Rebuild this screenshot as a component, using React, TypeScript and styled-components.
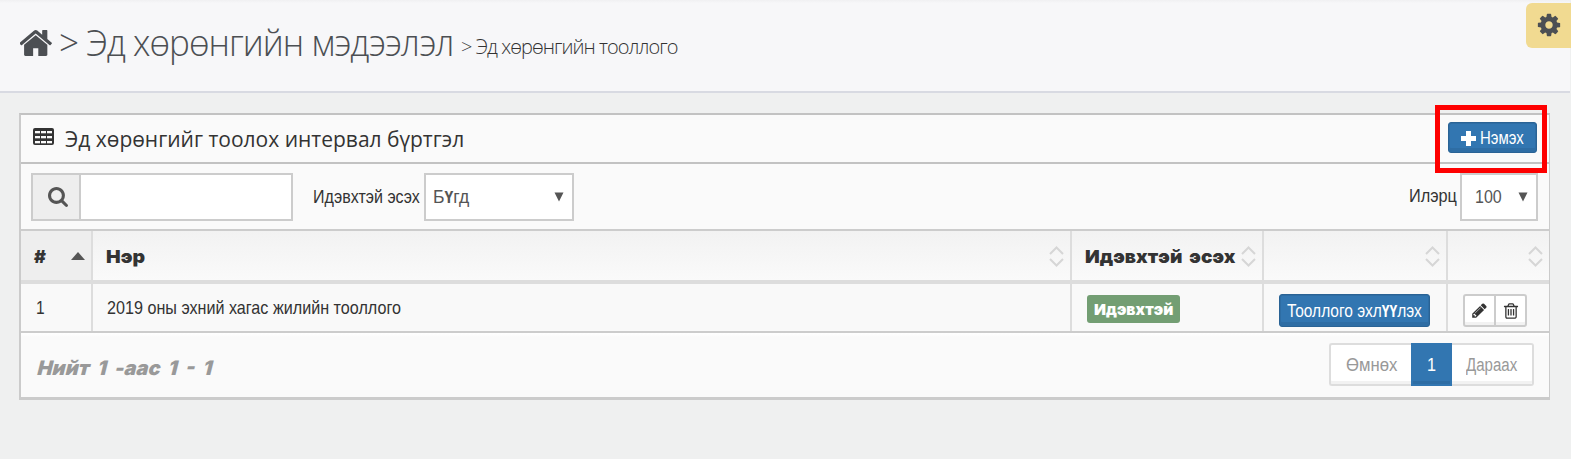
import React, { useLayoutEffect, useRef, useState } from 'react';
import styled, { createGlobalStyle, css } from 'styled-components';

const Global = createGlobalStyle`
  * { box-sizing: border-box; }
  html, body { margin: 0; padding: 0; }
  body {
    width: 1571px; height: 459px; overflow: hidden;
    background: #eff0f0;
    font-family: "Liberation Sans Narrow", "Liberation Sans", sans-serif;
    font-size: 19px; color: #333;
  }
`;

const FitBox = styled.span<{ $w: number }>`
  display: inline-block; flex: none;
  width: ${p => p.$w}px;
  white-space: nowrap;
`;
const FitInner = styled.span`
  display: inline-block; transform-origin: 0 50%; white-space: nowrap;
`;

/* Text condensed or widened to a given width */
function Fit({ w, children, className }: { w: number; children: React.ReactNode; className?: string }) {
  const ref = useRef<HTMLSpanElement>(null);
  const [scale, setScale] = useState(1);
  useLayoutEffect(() => {
    if (ref.current) setScale(w / ref.current.offsetWidth);
  }, [w]);
  return (
    <FitBox $w={w} className={className}>
      <FitInner ref={ref} style={{ transform: `scaleX(${scale})` }}>{children}</FitInner>
    </FitBox>
  );
}

const heavy = css`font-family: Inter, "Open Sans", sans-serif; font-weight: 900; word-spacing: 3px;`;

const Page = styled.div`width: 1571px; height: 459px; position: relative; overflow: hidden;`;

const Header = styled.header`
  width: 1570px; height: 93px; padding-left: 20px;
  display: flex; align-items: flex-start;
  background: linear-gradient(#f0f0f2, #f7f7f9 3px);
  border-bottom: 2px solid #d8dae2;
  font-family: "Open Sans", sans-serif; font-weight: 300;
  color: #4c4f53;
`;
const HomeSlot = styled.span`display: flex; margin-top: 30px; width: 39px; flex: none;`;
const Big = styled(Fit)`font-size: 36px; line-height: 50px; letter-spacing: -1px; margin: 18px 0 0 0;`;
const Crumb = styled(Fit)`font-size: 21px; line-height: 30px; letter-spacing: -1px; margin: 31px 0 0 8px; color: #333;`;

const GearTab = styled.div`
  position: absolute; right: 0; top: 3px; width: 45px; height: 45px;
  border-radius: 6px 0 0 6px; background: #f1da91; color: #4c4f53;
  display: flex; align-items: center; padding: 0 0 2px 10px;
`;

const Panel = styled.section`
  width: 1531px; margin: 20px 0 0 19px;
  border: 2px solid #cbcbcb; border-top-color: #c2c2c2; border-right-width: 1px; border-bottom-width: 3px;
  background: #fafafa;
`;
const TitleBar = styled.div`
  height: 49px; border-bottom: 2px solid #c2c2c2;
  display: flex; align-items: flex-start; padding: 0 12px;
`;
const TableSlot = styled.span`display: flex; margin-top: 13px; width: 32px; flex: none;`;
const Title = styled(Fit)`
  font-family: "Open Sans", sans-serif; font-size: 21px; line-height: 30px; margin-top: 9px;
`;
const Blue = styled.button<{ $w: number; $h: number }>`
  width: ${p => p.$w}px; height: ${p => p.$h}px; flex: none; padding: 0;
  display: flex; align-items: center; justify-content: center; gap: 4px;
  border: 1px solid #2a6395; border-radius: 3px;
  background: #3276b1; color: #fff; font: inherit; font-size: 18px;
  box-shadow: inset 1px 0 0 #2e6da4, inset -1px 0 0 #2e6da4, inset 0 1px 0 #2e6da4, inset 0 -4px 0 #2e6da4;
`;
const AddButton = styled(Blue)`margin: 7px 0 0 auto; padding-top: 1px; padding-right: 1px;`;

const Toolbar = styled.div`
  height: 67px; padding: 9px 11px 0 10px; border-bottom: 2px solid #ccc;
  display: flex; align-items: flex-start;
`;
const SearchBox = styled.div`
  width: 262px; height: 48px; display: flex; border: 2px solid #ccc; background: #fff;
`;
const Addon = styled.span`
  width: 48px; border-right: 2px solid #ccc; background: #eee; color: #555;
  display: flex; align-items: center; padding-left: 15px; padding-bottom: 1px;
`;
const Label = styled(Fit)`line-height: 22px; margin: 13px 0 0 20px;`;
const RightLabel = styled(Fit)`line-height: 22px; margin: 12px 3px 0 auto;`;
const Select = styled.div<{ $w: number; $pad: number; $ml?: number }>`
  width: ${p => p.$w}px; height: 48px; margin-left: ${p => p.$ml || 0}px;
  border: 2px solid #ccc; background: #fff; color: #555;
  display: flex; align-items: center; justify-content: space-between;
  padding: 0 8px 0 ${p => p.$pad}px;
`;

const cols = '72px 979px 192px 184px 101px';
const HeadRow = styled.div`
  display: grid; grid-template-columns: ${cols}; height: 53px; border-bottom: 4px solid #ddd;
`;
const Th = styled.div<{ $sorted?: boolean }>`
  display: flex; align-items: center; justify-content: space-between;
  padding: 1px 6px 0 13px; border-right: 2px solid #ddd;
  background: ${p => (p.$sorted ? '#eee' : 'linear-gradient(#f2f2f2, #fafafa)')};
  font-size: 18px; ${heavy}
  &:last-child { border-right: 0; }
`;
const Row = styled.div`
  display: grid; grid-template-columns: ${cols}; height: 49px;
  background: #f9f9f9; border-bottom: 2px solid #ccc;
`;
const Td = styled.div<{ $l: number }>`
  display: flex; align-items: flex-start; padding-left: ${p => p.$l}px; border-right: 2px solid #ddd;
  &:last-child { border-right: 0; }
`;
const CellText = styled(Fit)`line-height: 22px; margin-top: 13px;`;
const Badge = styled.span`
  width: 93px; height: 28px; margin-top: 11px; border-radius: 3px; background: #739e73; color: #fff;
  display: flex; align-items: center; justify-content: center;
  font-size: 15px; ${heavy}
`;
const StartButton = styled(Blue)`margin-top: 10px; padding-top: 1px;`;
const IconGroup = styled.div`
  display: flex; width: 64px; height: 33px; margin-top: 10px;
  border: 2px solid #ccc; border-radius: 3px; background: #fff; box-shadow: inset 0 -3px 0 #f2f2f2;
`;
const IconButton = styled.span`
  flex: 1; display: flex; align-items: center; justify-content: center;
  & + & { border-left: 2px solid #ccc; }
`;

const Footer = styled.div`
  height: 64px; display: flex; align-items: flex-start; justify-content: space-between;
  padding: 10px 15px 0 16px; background: linear-gradient(#fff, #fafafa 4px);
`;
const Total = styled(Fit)`
  ${heavy} word-spacing: 4px; color: #999; font-size: 20px; line-height: 26px; margin: 12px 0 0 1px;
  transform: skewX(-14deg);
`;
const Pager = styled.div`display: flex; width: 205px; height: 43px;`;
const PageItem = styled.span<{ $active?: boolean }>`
  width: ${p => (p.$active ? 41 : 82)}px;
  display: flex; align-items: center; justify-content: center;
  background: ${p => (p.$active ? '#3276b1' : '#fff')};
  color: ${p => (p.$active ? '#fff' : '#999')};
  border: 2px solid ${p => (p.$active ? '#3276b1' : '#ddd')};
  box-shadow: inset 0 -3px 0 ${p => (p.$active ? '#2e6da4' : '#f2f2f2')};
  font-size: 18px;
  padding-top: 2px;
  &:first-child { border-right: 0; border-radius: 3px 0 0 3px; }
  &:last-child { border-left: 0; border-radius: 0 3px 3px 0; padding-right: 1px; }
`;
const Highlight = styled.div`
  position: absolute; left: 1435px; top: 105px; width: 112px; height: 68px; border: 5px solid #fe0000;
`;
const Ue = styled.b`font-size: 0.9em; font-family: "Liberation Sans", sans-serif;`;

const paths = {
  home: 'M1408 992v480q0 26-19 45t-45 19h-384v-384h-256v384h-384q-26 0-45-19t-19-45v-480q0-1 .5-3t.5-3l575-474 575 474q1 2 1 6zm223-69l-62 74q-8 9-21 11h-3q-13 0-21-7l-692-577-692 577q-12 8-24 7-13-2-21-11l-62-74q-8-10-7-23.5t11-21.5l719-599q32-26 76-26t76 26l244 204v-195q0-14 9-23t23-9h192q14 0 23 9t9 23v408l219 182q10 8 11 21.5t-7 23.5z',
  search: 'M1216 832q0-185-131.5-316.5t-316.5-131.5-316.5 131.5-131.5 316.5 131.5 316.5 316.5 131.5 316.5-131.5 131.5-316.5zm512 832q0 52-38 90t-90 38q-54 0-90-38l-343-342q-179 124-399 124-143 0-273.5-55.5t-225-150-150-225-55.5-273.5 55.5-273.5 150-225 225-150 273.5-55.5 273.5 55.5 225 150 150 225 55.5 273.5q0 220-124 399l343 343q37 37 37 90z',
  cog: 'M1152 896q0-106-75-181t-181-75-181 75-75 181 75 181 181 75 181-75 75-181zm512-109v222q0 12-8 23t-20 13l-185 28q-19 54-39 91 35 50 107 138 10 12 10 25t-9 23q-27 37-99 108t-94 71q-12 0-26-9l-138-108q-44 23-91 38-16 136-29 186-7 28-36 28h-222q-14 0-24.5-8.5t-11.5-21.5l-28-184q-49-16-90-37l-141 107q-10 9-25 9-14 0-25-11-126-114-165-168-7-10-7-23 0-12 8-23 15-21 51-66.5t54-70.5q-27-50-41-99l-183-27q-13-2-21-12.5t-8-23.5v-222q0-12 8-23t19-13l186-28q14-46 39-92-40-57-107-138-10-12-10-24 0-10 9-23 26-36 98.5-107.5t94.5-71.5q13 0 26 10l138 107q44-23 91-38 16-136 29-186 7-28 36-28h222q14 0 24.5 8.5t11.5 21.5l28 184q49 16 90 37l142-107q9-9 24-9 13 0 25 10 129 119 165 170 7 8 7 22 0 12-8 23-15 21-51 66.5t-54 70.5q26 50 41 98l183 28q13 2 21 12.5t8 23.5z',
  pencil: 'M491 1536l91-91-235-235-91 91v107h128v128h107zm523-928q0-22-22-22-10 0-17 7l-542 542q-7 7-7 17 0 22 22 22 10 0 17-7l542-542q7-7 7-17zm-54-192l416 416-832 832h-416v-416zm683 96q0 53-37 90l-166 166-416-416 166-165q36-38 90-38 53 0 91 38l235 234q37 39 37 91z',
  trash: 'M704 736v576q0 14-9 23t-23 9h-64q-14 0-23-9t-9-23v-576q0-14 9-23t23-9h64q14 0 23 9t9 23zm256 0v576q0 14-9 23t-23 9h-64q-14 0-23-9t-9-23v-576q0-14 9-23t23-9h64q14 0 23 9t9 23zm256 0v576q0 14-9 23t-23 9h-64q-14 0-23-9t-9-23v-576q0-14 9-23t23-9h64q14 0 23 9t9 23zm128 724v-948h-896v948q0 22 7 40.5t14.5 27 10.5 8.5h832q3 0 10.5-8.5t14.5-27 7-40.5zm-672-1076h448l-48-117q-7-9-17-11h-317q-10 2-17 11zm928 32v64q0 14-9 23t-23 9h-96v948q0 83-47 143.5t-113 60.5h-832q-66 0-113-58.5t-47-141.5v-952h-96q-14 0-23-9t-9-23v-64q0-14 9-23t23-9h309l70-167q15-37 54-63t79-26h320q40 0 79 26t54 63l70 167h309q14 0 23 9t9 23z',
};

const Icon = ({ name, w, h = w, box = '0 0 1792 1792' }: { name: keyof typeof paths; w: number; h?: number; box?: string }) => (
  <svg width={w} height={h} viewBox={box} preserveAspectRatio="none" fill="currentColor"><path d={paths[name]} /></svg>
);
const Plus = () => (
  <svg width="15" height="15" viewBox="0 0 15 15" fill="#fff"><path d="M5 0h5V5h5v5h-5v5H5V10H0V5h5z" /></svg>
);
const TableIcon = () => (
  <svg width="21" height="17" viewBox="0 0 21 17">
    <rect width="21" height="17" rx="2" fill="#333" />
    {[3, 8, 13].map(y => [2, 8, 14].map(x => (
      <rect key={`${x}-${y}`} x={x} y={y} width="5" height="2.3" fill="#fafafa" />
    )))}
  </svg>
);
const Caret = () => (
  <svg width="10" height="10" viewBox="0 0 10 10"><path d="M0.5 0.5h9L5 9.5z" fill="#555" /></svg>
);
const Sort = () => (
  <svg width="15" height="21" viewBox="0 0 15 21" fill="none" stroke="#d6d6d6" strokeWidth="2">
    <path d="M1 8L7.5 1.5L14 8M1 13L7.5 19.5L14 13" />
  </svg>
);
const SortUp = () => (
  <svg width="14" height="8" viewBox="0 0 14 8"><path d="M0 8L7 0L14 8z" fill="#555" /></svg>
);

export default function App() {
  return (
    <Page>
      <Global />
      <Header>
        <HomeSlot><Icon name="home" w={32} h={26} box="53 253 1586 1283" /></HomeSlot>
        <Big w={394}>&gt; Эд хөрөнгийн мэдээлэл</Big>
        <Crumb w={216}>&gt; Эд хөрөнгийн тооллого</Crumb>
      </Header>
      <GearTab><Icon name="cog" w={26} /></GearTab>

      <Panel>
        <TitleBar>
          <TableSlot><TableIcon /></TableSlot>
          <Title w={399}>Эд хөрөнгийг тоолох интервал бүртгэл</Title>
          <AddButton $w={89} $h={31}><Plus /><Fit w={44}>Нэмэх</Fit></AddButton>
        </TitleBar>

        <Toolbar>
          <SearchBox><Addon><Icon name="search" w={20} box="64 128 1664 1664" /></Addon></SearchBox>
          <Label w={107}>Идэвхтэй эсэх</Label>
          <Select $w={150} $pad={7} $ml={4}><Fit w={36}>Б<Ue>Ү</Ue>гд</Fit><Caret /></Select>
          <RightLabel w={48}>Илэрц</RightLabel>
          <Select $w={78} $pad={13}><Fit w={27}>100</Fit><Caret /></Select>
        </Toolbar>

        <HeadRow>
          <Th $sorted><Fit w={12}>#</Fit><SortUp /></Th>
          <Th><Fit w={39}>Нэр</Fit><Sort /></Th>
          <Th><Fit w={150}>Идэвхтэй эсэх</Fit><Sort /></Th>
          <Th><span /><Sort /></Th>
          <Th><span /><Sort /></Th>
        </HeadRow>
        <Row>
          <Td $l={15}><CellText w={9}>1</CellText></Td>
          <Td $l={14}><CellText w={294}>2019 оны эхний хагас жилийн тооллого</CellText></Td>
          <Td $l={15}><Badge><Fit w={79}>Идэвхтэй</Fit></Badge></Td>
          <Td $l={15}>
            <StartButton $w={151} $h={33}><Fit w={135}>Тооллого эхл<Ue>ҮҮ</Ue>лэх</Fit></StartButton>
          </Td>
          <Td $l={15}>
            <IconGroup>
              <IconButton><Icon name="pencil" w={17} /></IconButton>
              <IconButton><Icon name="trash" w={18} /></IconButton>
            </IconGroup>
          </Td>
        </Row>
        <Footer>
          <Total w={175}>Нийт 1 -аас 1 - 1</Total>
          <Pager>
            <PageItem><Fit w={51}>Өмнөх</Fit></PageItem>
            <PageItem $active><Fit w={9}>1</Fit></PageItem>
            <PageItem><Fit w={51}>Дараах</Fit></PageItem>
          </Pager>
        </Footer>
      </Panel>
      <Highlight />
    </Page>
  );
}
